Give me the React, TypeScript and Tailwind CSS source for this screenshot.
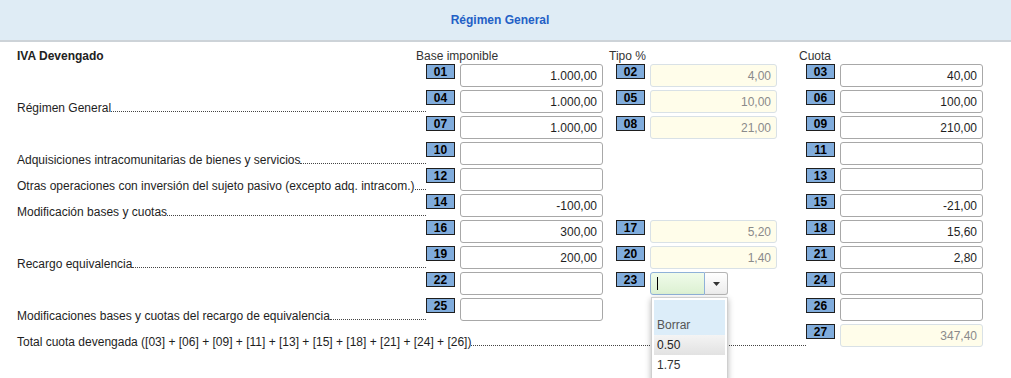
import React from 'react'

type Cell = { n: string; v?: string; ro?: boolean }

interface Row {
  label?: string
  c1?: Cell
  c2?: Cell | 'select'
  c3?: Cell
}

const ROWS: Row[] = [
  { c1: { n: '01', v: '1.000,00' }, c2: { n: '02', v: '4,00', ro: true }, c3: { n: '03', v: '40,00' } },
  { label: 'Régimen General', c1: { n: '04', v: '1.000,00' }, c2: { n: '05', v: '10,00', ro: true }, c3: { n: '06', v: '100,00' } },
  { c1: { n: '07', v: '1.000,00' }, c2: { n: '08', v: '21,00', ro: true }, c3: { n: '09', v: '210,00' } },
  { label: 'Adquisiciones intracomunitarias de bienes y servicios', c1: { n: '10' }, c3: { n: '11' } },
  { label: 'Otras operaciones con inversión del sujeto pasivo (excepto adq. intracom.)', c1: { n: '12' }, c3: { n: '13' } },
  { label: 'Modificación bases y cuotas', c1: { n: '14', v: '-100,00' }, c3: { n: '15', v: '-21,00' } },
  { c1: { n: '16', v: '300,00' }, c2: { n: '17', v: '5,20', ro: true }, c3: { n: '18', v: '15,60' } },
  { label: 'Recargo equivalencia', c1: { n: '19', v: '200,00' }, c2: { n: '20', v: '1,40', ro: true }, c3: { n: '21', v: '2,80' } },
  { c1: { n: '22' }, c2: 'select', c3: { n: '24' } },
  { label: 'Modificaciones bases y cuotas del recargo de equivalencia', c1: { n: '25' }, c3: { n: '26' } },
]

function Badge({ n }: { n: string }) {
  return (
    <div className="flex h-[15px] w-[29px] shrink-0 items-center justify-center border border-[#1e1e1e] bg-[#80acdc] text-[12px] font-bold leading-none text-black">
      {n}
    </div>
  )
}

function Field({ v, ro, wide }: { v?: string; ro?: boolean; wide: boolean }) {
  return (
    <div
      className={`flex h-[23px] shrink-0 items-center justify-end rounded-[3px] border pr-[5px] text-[12px] leading-[14px] ${
        wide ? 'w-[143px]' : 'w-[127px]'
      } ${ro ? 'border-[#d9e1e6] bg-[#fffdea] text-[#8a8a8a]' : 'border-[#a8a8a8] bg-white text-[#1e1e1e]'}`}
    >
      {v}
    </div>
  )
}

function Label({ text, wide }: { text?: string; wide?: boolean }) {
  return (
    <div
      className={`flex shrink-0 items-end pb-px pl-[17px] text-[12px] leading-[14px] text-[#1e1e1e] ${
        wide ? 'w-[806px]' : 'w-[426px]'
      }`}
    >
      {text && (
        <>
          <span className="whitespace-nowrap">{text}</span>
          <span className="mb-[3px] min-w-0 flex-1 border-b border-dotted border-[#444]" />
        </>
      )}
    </div>
  )
}

function Combo() {
  return (
    <div className="relative">
      <div className="flex h-[23px] w-[78px]">
        <div className="flex w-[55px] items-center rounded-l-[3px] border border-[#8fb1d8] bg-linear-to-b from-[#f0fbea] to-[#dcf1d2] pl-[6px]">
          <span className="h-[13px] w-px bg-black" />
        </div>
        <div className="flex w-[23px] items-center justify-center rounded-r-[3px] border border-l-0 border-[#b5b5b5] bg-linear-to-b from-white to-[#ececec]">
          <svg width="7" height="4" viewBox="0 0 7 4">
            <polygon points="0,0 7,0 3.5,4" fill="#333" />
          </svg>
        </div>
      </div>
      {/* lista desplegada */}
      <div className="absolute left-px top-[25px] z-10 h-[84px] w-[77px] border border-[#cfcfcf] bg-white p-[2px] text-[12px] shadow-[0_2px_6px_rgba(0,0,0,0.3)]">
        <div className="bg-[#dcedf9] pl-[3px] pt-[15px] leading-[20px] text-[#555]">Borrar</div>
        <div className="bg-linear-to-b from-[#f4f4f4] to-[#e2e2e2] pl-[3px] leading-[20px] text-[#222]">0.50</div>
        <div className="pl-[3px] leading-[20px] text-[#333]">1.75</div>
      </div>
    </div>
  )
}

export default function App() {
  return (
    <div className="h-[378px] w-[1011px] overflow-hidden bg-white font-['Liberation_Sans',Arial,sans-serif]">
      <div className="flex h-[42px] items-center justify-center border-b-2 border-[#cdd3d8] bg-[#dfecf5] pr-[11px]">
        <span className="text-[12px] font-bold text-[#2360c6]">Régimen General</span>
      </div>

      {/* cabecera de columnas */}
      <div className="flex h-[22px] items-end pb-px text-[12px] leading-[14px] text-[#333]">
        <div className="w-[416px] shrink-0 pl-[17px] font-bold text-[#222]">IVA Devengado</div>
        <div className="w-[193px] shrink-0">Base imponible</div>
        <div className="w-[190px] shrink-0">Tipo %</div>
        <div>Cuota</div>
      </div>

      {ROWS.map((r, i) => (
        <div key={i} className="flex h-[26px]">
          <Label text={r.label} />
          <div className="flex w-[177px] shrink-0 items-start gap-[5px]">
            {r.c1 && (
              <>
                <Badge n={r.c1.n} />
                <Field v={r.c1.v} ro={r.c1.ro} wide />
              </>
            )}
          </div>
          <div className="ml-[13px] flex w-[161px] shrink-0 items-start gap-[5px]">
            {r.c2 === 'select' ? (
              <>
                <Badge n="23" />
                <Combo />
              </>
            ) : (
              r.c2 && (
                <>
                  <Badge n={r.c2.n} />
                  <Field v={r.c2.v} ro={r.c2.ro} wide={false} />
                </>
              )
            )}
          </div>
          <div className="ml-[29px] flex w-[177px] shrink-0 items-start gap-[5px]">
            {r.c3 && (
              <>
                <Badge n={r.c3.n} />
                <Field v={r.c3.v} ro={r.c3.ro} wide />
              </>
            )}
          </div>
        </div>
      ))}

      <div className="flex h-[26px]">
        <Label text="Total cuota devengada ([03] + [06] + [09] + [11] + [13] + [15] + [18] + [21] + [24] + [26])" wide />
        <div className="flex w-[177px] shrink-0 items-start gap-[5px]">
          <Badge n="27" />
          <Field v="347,40" ro wide />
        </div>
      </div>
    </div>
  )
}
